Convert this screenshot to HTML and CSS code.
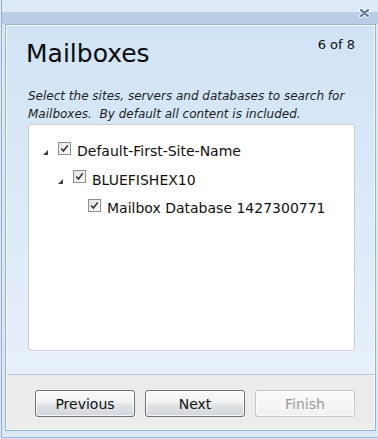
FILE: index.html
```html
<!DOCTYPE html>
<html>
<head>
<meta charset="utf-8">
<link rel="stylesheet" href="styles.css">
</head>
<body>
<div class="window">
  <div class="titlebar">
    <svg class="close" width="11" height="10" viewBox="0 0 11 10">
      <path d="M2 2 L9 8 M9 2 L2 8" stroke="#ffffff" stroke-width="4" stroke-linecap="round" fill="none"/>
      <path d="M2 2 L9 8 M9 2 L2 8" stroke="#58739b" stroke-width="2.3" stroke-linecap="round" fill="none"/>
    </svg>
  </div>
  <div class="panel">
    <div class="content">
      <div class="head">
        <h1 class="title">Mailboxes</h1>
        <span class="step">6 of 8</span>
      </div>
      <p class="desc">Select the sites, servers and databases to search for Mailboxes.&nbsp; By default all content is included.</p>
      <div class="tree">
        <div class="row lvl0">
          <span class="tw"><svg width="5" height="5" viewBox="0 0 5 5"><path d="M5 0 L5 5 L0 5 Z" fill="#404040"/></svg></span>
          <span class="cb"><svg width="11" height="11" viewBox="0 0 11 11"><path d="M2.2 5.6 L4.4 8 L8.8 2.4" stroke="#2a2a2a" stroke-width="1.5" fill="none"/></svg></span>
          <span class="label">Default-First-Site-Name</span>
        </div>
        <div class="row lvl1">
          <span class="tw"><svg width="5" height="5" viewBox="0 0 5 5"><path d="M5 0 L5 5 L0 5 Z" fill="#404040"/></svg></span>
          <span class="cb"><svg width="11" height="11" viewBox="0 0 11 11"><path d="M2.2 5.6 L4.4 8 L8.8 2.4" stroke="#2a2a2a" stroke-width="1.5" fill="none"/></svg></span>
          <span class="label">BLUEFISHEX10</span>
        </div>
        <div class="row lvl2">
          <span class="tw"></span>
          <span class="cb"><svg width="11" height="11" viewBox="0 0 11 11"><path d="M2.2 5.6 L4.4 8 L8.8 2.4" stroke="#2a2a2a" stroke-width="1.5" fill="none"/></svg></span>
          <span class="label">Mailbox Database 1427300771</span>
        </div>
      </div>
    </div>
    <div class="footer">
      <button class="btn">Previous</button>
      <button class="btn">Next</button>
      <button class="btn disabled">Finish</button>
    </div>
  </div>
</div>
</body>
</html>
```
FILE: styles.css
```css
html, body {
  margin: 0;
  padding: 0;
}
body {
  width: 378px;
  height: 439px;
  overflow: hidden;
  background: #dce8f5;
  font-family: "DejaVu Sans", Verdana, sans-serif;
  color: #111;
}
.window {
  box-sizing: border-box;
  height: 438px;
  margin-left: 1px;
  border-left: 1px solid #9aacc4;
  border-bottom: 1px solid #9ab8e0;
  padding-bottom: 6px;
  display: flex;
  flex-direction: column;
}
.titlebar {
  height: 24px;
  flex: none;
  display: flex;
  justify-content: flex-end;
  align-items: center;
  padding-right: 8px;
  background: linear-gradient(#dde9f6 0, #dde9f6 12px, #bacee8 12px, #bacee8 24px);
}
.close {
  display: block;
  margin-top: 1px;
}
.panel {
  flex: 1;
  display: flex;
  flex-direction: column;
  margin: 0 2px 0 3px;
  border: 1px solid #94b3dc;
  padding: 1px;
  background: #f7fafd;
}
.content {
  flex: 1;
  display: flex;
  flex-direction: column;
  background: linear-gradient(#d0e3f5, #e7f0fa);
  padding-top: 13px;
}
.head {
  display: flex;
  justify-content: space-between;
  align-items: flex-start;
  padding: 0 19px 0 19px;
}
.title {
  margin: 0;
  font-size: 25px;
  line-height: 30px;
  font-weight: normal;
  color: #0c0c0c;
}
.step {
  font-size: 13px;
  line-height: 16px;
  margin-top: -2px;
  color: #111;
}
.desc {
  margin: 19px 19px 1px 21px;
  font-size: 12px;
  line-height: 17.5px;
  font-style: italic;
  color: #1e1e1e;
}
.tree {
  flex: 1;
  margin: 0 19px 23px 21px;
  background: #fff;
  border: 1px solid #c6ccd3;
  border-radius: 3px;
  padding-top: 12px;
  box-shadow: 0 1px 1px rgba(255,255,255,0.6);
}
.row {
  display: flex;
  align-items: center;
  height: 28.5px;
  padding-left: 14px;
}
.row.lvl1 { padding-left: 29px; }
.row.lvl2 { padding-left: 44px; }
.tw {
  width: 15px;
  flex: none;
  display: flex;
  margin-top: 3px;
}
.tw svg { display: block; }
.cb {
  box-sizing: border-box;
  width: 13px;
  height: 13px;
  flex: none;
  border: 1px solid #8e8f91;
  background: linear-gradient(135deg, #e2e3e5, #fbfbfb);
  margin-bottom: 6px;
  display: flex;
}
.cb svg { display: block; }
.label {
  margin-left: 6px;
  font-size: 14px;
  line-height: 28.5px;
  color: #111;
  white-space: nowrap;
}
.footer {
  flex: none;
  height: 55px;
  box-sizing: border-box;
  border-top: 1px solid #b8c6d6;
  background: #ececec;
  display: flex;
  gap: 10px;
  padding: 15px 0 0 28px;
}
.btn {
  box-sizing: border-box;
  width: 100px;
  height: 27px;
  border: 1px solid #707275;
  border-radius: 3px;
  background: linear-gradient(#fafafa 0%, #f0f1f2 45%, #e1e4e7 55%, #d3d7dc 100%);
  box-shadow: inset 0 0 0 1px rgba(255,255,255,0.75);
  font-family: "DejaVu Sans", Verdana, sans-serif;
  font-size: 14px;
  color: #111;
  padding: 0;
}
.btn.disabled {
  border-color: #c3c6ca;
  background: linear-gradient(#fbfbfb, #f0f0f0);
  color: #9c9c9c;
}
```
